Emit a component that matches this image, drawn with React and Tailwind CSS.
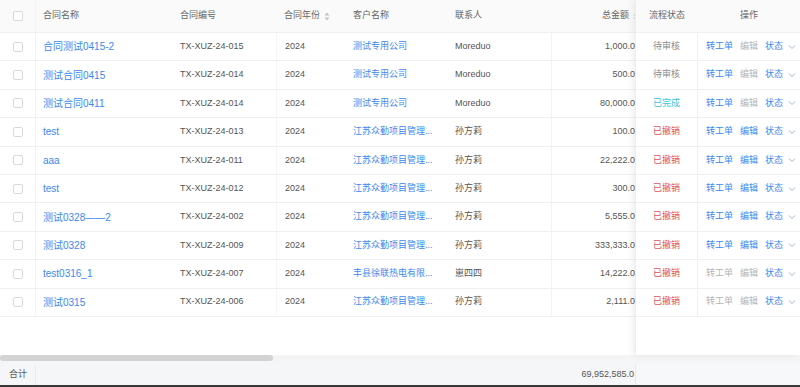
import React from "react";

const rows = [
  { name: "合同测试0415-2", code: "TX-XUZ-24-015", cust: "测试专用公司", contact: "Moreduo", amt: "1,000.0", st: "pending", a1: false },
  { name: "测试合同0415", code: "TX-XUZ-24-014", cust: "测试专用公司", contact: "Moreduo", amt: "500.0", st: "pending", a1: false },
  { name: "测试合同0411", code: "TX-XUZ-24-014", cust: "测试专用公司", contact: "Moreduo", amt: "80,000.0", st: "done", a1: false },
  { name: "test", code: "TX-XUZ-24-013", cust: "江苏众勤项目管理...", contact: "孙方莉", amt: "100.0", st: "cancel", a1: true },
  { name: "aaa", code: "TX-XUZ-24-011", cust: "江苏众勤项目管理...", contact: "孙方莉", amt: "22,222.0", st: "cancel", a1: true },
  { name: "test", code: "TX-XUZ-24-012", cust: "江苏众勤项目管理...", contact: "孙方莉", amt: "300.0", st: "cancel", a1: true },
  { name: "测试0328——2", code: "TX-XUZ-24-002", cust: "江苏众勤项目管理...", contact: "孙方莉", amt: "5,555.0", st: "cancel", a1: true },
  { name: "测试0328", code: "TX-XUZ-24-009", cust: "江苏众勤项目管理...", contact: "孙方莉", amt: "333,333.0", st: "cancel", a1: true },
  { name: "test0316_1", code: "TX-XUZ-24-007", cust: "丰县徐联热电有限...", contact: "崽四四", amt: "14,222.0", st: "cancel", a1: false, a0: true },
  { name: "测试0315", code: "TX-XUZ-24-006", cust: "江苏众勤项目管理...", contact: "孙方莉", amt: "2,111.0", st: "cancel", a1: false, a0: true },
];

function Sort() {
  return (
    <svg width="6" height="9" viewBox="0 0 6 9" className="ml-[4px]">
      <path d="M3 0.5 L5.5 3.5 L0.5 3.5 Z" fill="#c4c4c4" />
      <path d="M3 8.5 L5.5 5.5 L0.5 5.5 Z" fill="#c4c4c4" />
    </svg>
  );
}

function Check() {
  return <div className="w-[10px] h-[10px] border border-[#d9d9d9] rounded-[2px] bg-white" />;
}

function Chevron() {
  return (
    <svg width="8" height="6" viewBox="0 0 8 6" className="ml-[5px]">
      <path d="M1 1.5 L4 4.5 L7 1.5" fill="none" stroke="#9fb3cf" strokeWidth="1" />
    </svg>
  );
}

const statusEl = {
  pending: <span className="text-[#8c8c8c]">待审核</span>,
  done: <span className="text-[#3cc3dc]">已完成</span>,
  cancel: <span className="text-[#e0525a]">已撤销</span>,
};

export default function App() {
  const blue = "text-[#3d88f0]";
  return (
    <div
      className="w-[800px] h-[387px] bg-white flex flex-col overflow-hidden text-[9px] text-[#555]"
      style={{ fontFamily: '"Liberation Sans", "Noto Sans CJK SC", sans-serif' }}
    >
      <div className="flex h-[355px]">
        {/* scrolling part */}
        <div className="w-[635px] overflow-hidden flex flex-col">
          <div className="w-[645px] flex h-[33px] bg-[#fafafa] border-b border-[#f0f0f0] items-center text-[#666]">
            <div className="w-[36px] h-full flex items-center justify-center border-r border-[#f3f3f3]"><Check /></div>
            <div className="w-[134px] pl-[7px]">合同名称</div>
            <div className="w-[106px] pl-[10px]">合同编号</div>
            <div className="w-[67px] pl-[8px] flex items-center">合同年份<Sort /></div>
            <div className="w-[102px] pl-[10px]">客户名称</div>
            <div className="w-[107px] pl-[10px]">联系人</div>
            <div className="w-[93px] pr-[6px] flex items-center justify-end">总金额<Sort /></div>
          </div>
          {rows.map((r, i) => (
            <div key={i} className="w-[645px] flex h-[28.4px] border-b border-[#f0f0f0] items-center">
              <div className="w-[36px] h-full flex items-center justify-center border-r border-[#f3f3f3]"><Check /></div>
              <div className={`w-[134px] pl-[7px] text-[10px] ${blue}`}>{r.name}</div>
              <div className="w-[106px] pl-[10px]">{r.code}</div>
              <div className="w-[67px] h-full flex items-center pl-[8px] border-l border-[#f5f5f5]">2024</div>
              <div className={`w-[102px] pl-[10px] whitespace-nowrap ${blue}`}>{r.cust}</div>
              <div className="w-[107px] h-full flex items-center pl-[10px] border-r border-[#f3f3f3]">{r.contact}</div>
              <div className="w-[93px] pr-[10px] text-right">{r.amt}</div>
            </div>
          ))}
          <div className="flex-1" />
        </div>
        {/* fixed right part */}
        <div className="w-[165px] flex flex-col bg-white shadow-[-3px_0_6px_rgba(0,0,0,0.06)] border-l border-[#eeeeee] z-10">
          <div className="flex h-[33px] bg-[#fafafa] border-b border-[#f0f0f0] items-center text-[#666]">
            <div className="w-[62px] text-center">流程状态</div>
            <div className="flex-1 text-center">操作</div>
          </div>
          {rows.map((r, i) => (
            <div key={i} className="flex h-[28.4px] border-b border-[#f0f0f0] items-center">
              <div className="w-[62px] h-full flex items-center justify-center border-r border-[#f0f0f0]">{statusEl[r.st]}</div>
              <div className="flex-1 flex items-center pl-[8px] gap-[7px]">
                <span className={r.a0 ? "text-[#b5b5b5]" : blue}>转工单</span>
                <span className={r.a1 ? blue : "text-[#b5b5b5]"}>编辑</span>
                <span className={`flex items-center ${blue}`}>状态<Chevron /></span>
              </div>
            </div>
          ))}
          <div className="flex-1" />
        </div>
      </div>
      {/* scrollbar */}
      <div className="h-[6px] bg-[#f4f4f4] flex">
        <div className="w-[273px] h-full bg-[#d3d3d3] rounded-[3px]" />
      </div>
      {/* footer */}
      <div className="h-[24px] flex bg-[#f5f6f8] items-center pt-[3px]">
        <div className="w-[635px] flex items-center h-full">
          <div className="w-[36px] h-full flex items-center pl-[9px] border-r border-[#ebebeb]">合计</div>
          <div className="flex-1 text-right pr-[1px]">69,952,585.0</div>
        </div>
        <div className="flex-1 h-full bg-[#f7f8fa] border-l border-[#e8e8e8]" />
      </div>
      <div className="h-[2px] bg-[#3a3a3a]" />
    </div>
  );
}
